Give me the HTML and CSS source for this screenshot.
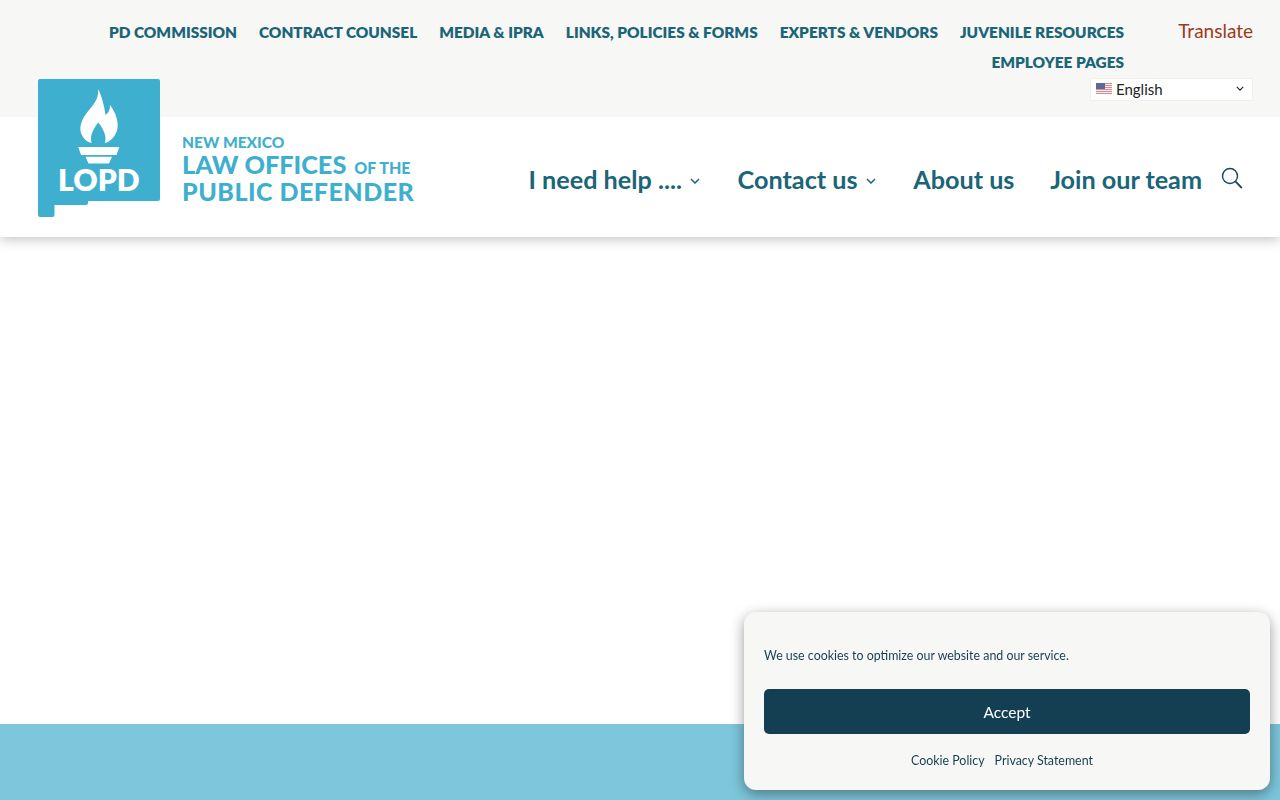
FILE: index.html
```html
<!DOCTYPE html>
<html lang="en">

<head>
    <meta charset="utf-8">
    <meta name="viewport" content="width=device-width, initial-scale=1.0">
    <title>New Mexico Law Offices of the Public Defender</title>
    <link rel="stylesheet" href="styles.css">
</head>

<body>

    <header class="header">
        <div class="topbar">
            <nav class="topnav">
                <a href="#">PD COMMISSION</a>
                <a href="#">CONTRACT COUNSEL</a>
                <a href="#">MEDIA &amp; IPRA</a>
                <a href="#">LINKS, POLICIES &amp; FORMS</a>
                <a href="#">EXPERTS &amp; VENDORS</a>
                <a href="#">JUVENILE RESOURCES</a>
                <a href="#">EMPLOYEE PAGES</a>
            </nav>
            <div class="translate">
                <p class="translate-title">Translate</p>
                <div class="lang">
                    <svg class="flag" viewBox="0 0 16 11" width="16" height="11">
                        <rect width="16" height="11" fill="#f1f1f4" />
                        <path d="M0 .5h16M0 2.5h16M0 4.5h16M0 6.5h16M0 8.5h16M0 10.5h16" stroke="#d98a8f" />
                        <rect width="9" height="6" fill="#5b6a94" />
                    </svg>
                    <span class="lang-name">English</span>
                    <svg class="lang-arrow" viewBox="0 0 10 6" width="8" height="5">
                        <path d="M1 1l4 4 4-4" fill="none" stroke="#222" stroke-width="1.4" />
                    </svg>
                </div>
            </div>
        </div>

        <div class="mainbar">
            <nav class="mainnav">
                <a href="#">I need help ....<svg class="caret" viewBox="0 0 10 6" width="10" height="6"><path d="M1 1l4 4 4-4" fill="none" stroke="#1a6577" stroke-width="1.5" /></svg></a>
                <a href="#">Contact us<svg class="caret" viewBox="0 0 10 6" width="10" height="6"><path d="M1 1l4 4 4-4" fill="none" stroke="#1a6577" stroke-width="1.5" /></svg></a>
                <a href="#">About us</a>
                <a href="#">Join our team</a>
            </nav>
            <svg class="search" viewBox="0 0 22 22" width="22" height="22">
                <circle cx="9" cy="9" r="7.5" fill="none" stroke="#1d4658" stroke-width="1.4" />
                <path d="M14.4 14.4l6.4 6.6" fill="none" stroke="#1d4658" stroke-width="1.8" />
            </svg>
        </div>

        <a class="logo" href="#">
            <svg class="logo-mark" viewBox="38 79 122 138" width="122" height="138">
                <path d="M40 79H158a2 2 0 0 1 2 2V199a2 2 0 0 1-2 2H88V203a2 2 0 0 1-2 2H54.500V215a2 2 0 0 1-2 2H40a2 2 0 0 1-2-2V81a2 2 0 0 1 2-2z" fill="#3fafcf" />
                <path d="M98.300 89C99 100 92 106 86 114C80 122 78.500 131 83 137C85 140 88 142.500 91.800 143C89.500 138 92 130 98.300 122.500C104.500 130 107 138 104.800 143C110 142 115 137 117.200 130C119 122 116 113 110 105C110 110 108.500 113 105.500 115C104.500 107 102 97 98.300 89z" fill="#fff" />
                <path d="M78.300 147H119.300L116.500 155H81zM85.500 156.700H112L109 163.500H88.500z" fill="#fff" />
                <text class="logo-lopd" x="58" y="190.500">LOPD</text>
            </svg>
            <span class="logo-text">
                <span class="logo-small">NEW MEXICO</span>
                <span class="logo-big">LAW OFFICES <span class="logo-of">OF THE</span></span>
                <span class="logo-big logo-wide">PUBLIC DEFENDER</span>
            </span>
        </a>
    </header>

    <main class="content"></main>

    <footer class="footer"></footer>

    <aside class="cookie">
        <p class="cookie-text">We use cookies to optimize our website and our service.</p>
        <button class="cookie-btn">Accept</button>
        <div class="cookie-links">
            <a href="#">Cookie Policy</a>
            <a href="#">Privacy Statement</a>
        </div>
    </aside>

</body>

</html>
```

FILE: styles.css
```css
* {
    box-sizing: border-box;
}

html,
body {
    margin: 0;
    height: 100%;
    overflow: hidden;
}

body {
    display: flex;
    flex-direction: column;
    background-color: #fff;
    font-family: 'Lato', sans-serif;
}

a {
    text-decoration: none;
    color: inherit;
}

p {
    margin: 0;
}

.header {
    position: relative;
    z-index: 2;
    box-shadow: 0 2px 12px rgba(0, 0, 0, 0.25);
}

.topbar {
    display: flex;
    justify-content: flex-end;
    height: 117px;
    padding: 17px 27px 0 0;
    background-color: #f7f7f5;
}

.topnav {
    display: flex;
    flex-wrap: wrap;
    justify-content: flex-end;
    align-content: flex-start;
    column-gap: 22px;
    width: 1030px;
    height: 60px;
    color: #1a6577;
    font-size: 15.4px;
    font-weight: 800;
    line-height: 30px;
}

.translate {
    display: flex;
    flex-direction: column;
    align-items: flex-end;
    width: 163px;
    margin-left: -34px;
}

.translate-title {
    color: #9c3a1c;
    font-size: 19px;
    line-height: 27px;
}

.lang {
    display: flex;
    align-items: center;
    width: 163px;
    height: 23px;
    margin-top: 34px;
    padding: 0 8px 2px 5px;
    background-color: #fff;
    border: 1px solid #f0f0ee;
    color: #222;
    font-size: 15px;
}

.flag {
    margin-right: 4px;
}

.lang-name {
    flex: 1;
}

.mainbar {
    display: flex;
    justify-content: flex-end;
    align-items: center;
    height: 120px;
    padding: 4px 37px 0 0;
    background-color: #fff;
}

.mainnav {
    display: flex;
    align-items: center;
    column-gap: 35.7px;
    color: #1a6577;
    font-size: 25.2px;
    font-weight: 700;
}

.caret {
    margin: 0 2px 0 8px;
    vertical-align: 5px;
}

.search {
    margin-left: 19px;
    margin-bottom: 2px;
}

.logo {
    position: absolute;
    top: 79px;
    left: 38px;
    display: flex;
    align-items: flex-start;
    color: #3fafcf;
}

.logo-lopd {
    fill: #fff;
    font-family: 'Lato', sans-serif;
    font-size: 30px;
    font-weight: 800;
}

.logo-text {
    display: flex;
    flex-direction: column;
    margin: 54px 0 0 22px;
    font-weight: 900;
    white-space: nowrap;
}

.logo-small {
    font-size: 15.5px;
    line-height: 18px;
}

.logo-big {
    font-size: 25.3px;
    line-height: 27px;
}

.logo-of {
    margin-left: 2px;
    font-size: 16px;
    line-height: 1;
}

.logo-wide {
    font-size: 25px;
    letter-spacing: 0.5px;
}

.content {
    height: 487px;
}

.footer {
    flex: 1;
    background-color: #7dc6dc;
}

.cookie {
    position: fixed;
    left: 744px;
    top: 612px;
    z-index: 3;
    display: flex;
    flex-direction: column;
    width: 526px;
    height: 178px;
    padding: 35px 20px 0;
    background-color: #f7f7f5;
    border-radius: 12px;
    box-shadow: 0 4px 14px rgba(0, 0, 0, 0.4);
    color: #143f52;
    font-size: 12.4px;
}

.cookie-text {
    line-height: 18px;
}

.cookie-btn {
    height: 45px;
    margin-top: 24px;
    border: none;
    border-radius: 5px;
    background-color: #143f52;
    color: #fff;
    font-family: 'Lato', sans-serif;
    font-size: 15.5px;
}

.cookie-links {
    display: flex;
    justify-content: center;
    column-gap: 10px;
    margin-top: 18px;
    padding-right: 10px;
    line-height: 18px;
}
```
